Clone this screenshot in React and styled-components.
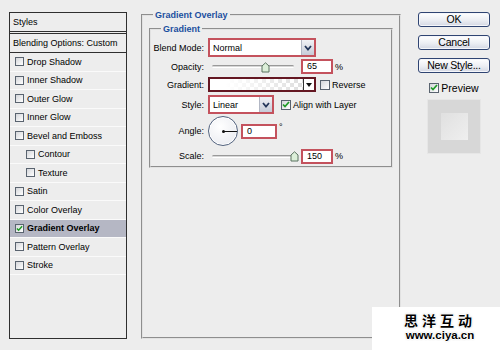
import React from 'react'
import styled, { createGlobalStyle } from 'styled-components'

const GlobalStyle = createGlobalStyle`
	html, body {
		margin: 0;
		padding: 0;
		background: #ededed;
	}
	body {
		font-family: 'Liberation Sans', Arial, sans-serif;
		font-size: 9px;
		color: #000;
	}
	* {
		box-sizing: border-box;
	}
`

const Page = styled.div`
	position: relative;
	width: 500px;
	height: 350px;
	overflow: hidden;
	display: flex;
	align-items: flex-start;
	background: #ededed;
`

/* ---------- left styles list ---------- */

const StylesPanel = styled.div`
	margin: 12px 0 0 9px;
	width: 118px;
	height: 327px;
	border: 1px solid #2f2f2f;
	display: flex;
	flex-direction: column;
`

const PanelHead = styled.div`
	height: 21px;
	line-height: 18px;
	padding-left: 3px;
	border-bottom: 3px double #2f2f2f;
`

const BlendRow = styled.div`
	height: 19px;
	line-height: 18px;
	padding-left: 3px;
	border-bottom: 1px solid #2f2f2f;
`

const StyleRow = styled.div`
	height: 18.5px;
	display: flex;
	align-items: center;
	gap: 3px;
	padding-left: ${({ indent }) => (indent ? '16px' : '5px')};
	border-bottom: 1px solid #fafafa;
	background: ${({ active }) => (active ? '#b5b7c4' : 'transparent')};
	font-weight: ${({ active }) => (active ? 700 : 400)};
`

const Box = styled.span`
	width: ${({ size }) => size || 9}px;
	height: ${({ size }) => size || 9}px;
	flex: none;
	border: 1px solid #59636f;
	background: linear-gradient(135deg, #d4d6da, #ffffff);
	display: flex;
	align-items: center;
	justify-content: center;
`

const Check = ({ checked, size }) => (
	<Box size={size}>
		{checked && (
			<svg width="8" height="7" viewBox="0 0 8 7">
				<path d="M1 3.5 L3 5.5 L7 1" fill="none" stroke="#1e9a26" strokeWidth="1.7" />
			</svg>
		)}
	</Box>
)

/* ---------- center group ---------- */

const Group = styled.fieldset`
	margin: ${({ outer }) => (outer ? '9px 0 0 14px' : '2px 0 0 0')};
	width: ${({ outer }) => (outer ? '260px' : '244px')};
	height: ${({ outer }) => (outer ? '330px' : '145px')};
	min-width: 0;
	border: 2px groove #e2e2e2;
	padding: ${({ outer }) => (outer ? '0 6px' : '0')};
`

const Legend = styled.legend`
	margin-left: ${({ outer }) => (outer ? '4px' : '10px')};
	padding: 0 2px;
	line-height: 12px;
	font-size: 9px;
	font-weight: 700;
	color: #1b4f9f;
`

const Form = styled.div`
	padding-top: 3px;
	display: flex;
	flex-direction: column;
`

const FieldRow = styled.div`
	display: flex;
	align-items: center;
	height: ${({ h }) => h}px;
	margin-top: ${({ mt }) => mt || 0}px;
`

const Label = styled.span`
	width: 53px;
	margin-right: 4px;
	text-align: right;
	flex: none;
`

const Select = styled.div`
	width: ${({ w }) => w}px;
	height: 19px;
	border: 2px solid #c4525d;
	background: #fff;
	display: flex;
	align-items: center;
	padding-left: 3px;
`

const SelectText = styled.span`
	flex: 1;
`

const DropButton = styled.span`
	width: 13px;
	height: 15px;
	background: linear-gradient(#f1f2f6, #c6cbd8);
	border-left: 1px solid #b2b7c4;
	display: flex;
	align-items: center;
	justify-content: center;
`

const Chevron = () => (
	<svg width="8" height="6" viewBox="0 0 8 6">
		<path d="M1 1 L4 4.5 L7 1" fill="none" stroke="#24365a" strokeWidth="1.8" />
	</svg>
)

const Input = styled.div`
	width: ${({ w }) => w}px;
	height: 15px;
	margin-left: ${({ ml }) => ml || 0}px;
	border: 2px solid #c4525d;
	background: #fff;
	padding-left: 4px;
	line-height: 11px;
`

const Unit = styled.span`
	margin-left: 2px;
	align-self: ${({ top }) => (top ? 'flex-start' : 'center')};
	margin-top: ${({ top }) => (top ? '6px' : '0')};
`

const SliderBox = styled.div`
	position: relative;
	width: 89px;
	height: 14px;
	display: flex;
	align-items: center;
	padding-left: 4px;
`

const Track = styled.div`
	width: 82px;
	height: 3px;
	border-top: 1px solid #999;
	border-bottom: 1px solid #fff;
	background: #d6d6d6;
	border-radius: 2px;
`

const Thumb = styled.svg`
	position: absolute;
	top: 2px;
	margin-left: -4px;
`

const Slider = ({ pos }) => (
	<SliderBox>
		<Track />
		<Thumb width="9" height="11" viewBox="0 0 9 11" style={{ left: 4 + pos * 82 }}>
			<path d="M1 4 L4.5 0.8 L8 4 L8 10 L1 10 Z" fill="#dcefd9" stroke="#5a7260" strokeWidth="1" />
		</Thumb>
	</SliderBox>
)

const GradientBox = styled.div`
	width: 108px;
	height: 15px;
	border: 2px solid #641722;
	display: flex;
	background: linear-gradient(to right, #fff 15%, rgba(255, 255, 255, 0) 90%),
		repeating-conic-gradient(#dedede 0 25%, #fff 0 50%) 0 0 / 8px 8px;
`

const GradientFill = styled.span`
	flex: 1;
`

const GradientArrow = styled.span`
	width: 11px;
	background: #fff;
	border-left: 1px solid #333;
	display: flex;
	align-items: center;
	justify-content: center;
	&::after {
		content: '';
		border-left: 3px solid transparent;
		border-right: 3px solid transparent;
		border-top: 4px solid #111;
	}
`

const Inline = styled.span`
	display: flex;
	align-items: center;
	gap: 2px;
	margin-left: ${({ ml }) => ml}px;
`

const Dial = styled.div`
	position: relative;
	width: 30px;
	height: 30px;
	border-radius: 50%;
	border: 1px solid #52627e;
	background: radial-gradient(circle at 40% 35%, #ffffff, #e6e8ee);
	box-shadow: inset 0 0 0 1px #fff;
	flex: none;
	&::before {
		content: '';
		position: absolute;
		left: 13px;
		top: 13px;
		width: 3px;
		height: 3px;
		border-radius: 50%;
		background: #111;
	}
	&::after {
		content: '';
		position: absolute;
		left: 14px;
		top: 14px;
		width: 14px;
		height: 1px;
		background: #111;
	}
`

/* ---------- right column ---------- */

const Side = styled.div`
	margin: 12px 0 0 17px;
	width: 72px;
	display: flex;
	flex-direction: column;
	align-items: center;
`

const Button = styled.div`
	width: 72px;
	height: 15px;
	margin-bottom: 8px;
	border: 1px solid #2f4472;
	border-radius: 3px;
	background: linear-gradient(#ffffff, #eceef3 55%, #d3d7e3);
	box-shadow: inset 0 0 0 1px #f5f6fa;
	font-size: 10.5px;
	line-height: 13px;
	text-align: center;
	letter-spacing: -0.2px;
`

const PreviewRow = styled.div`
	display: flex;
	align-items: center;
	gap: 2px;
	margin-top: 1px;
	font-size: 10.5px;
	height: 11px;
`

const Swatch = styled.div`
	margin-top: 6px;
	width: 54px;
	height: 55px;
	background: #d7d7d7;
	border: 1px solid #e6e6e6;
	display: flex;
	align-items: center;
	justify-content: center;
`

const SwatchInner = styled.div`
	width: 27px;
	height: 27px;
	background: linear-gradient(135deg, #e0e0e0, #efefef);
`

/* ---------- watermark ---------- */

const Watermark = styled.div`
	position: absolute;
	right: 0;
	bottom: 0;
	width: 128px;
	height: 43px;
	background: #fff;
	display: flex;
	flex-direction: column;
	align-items: center;
	gap: 1px;
	padding: 6px 0 0 8px;
	font-weight: 700;
	color: #000;
	text-shadow: 1px 0 #fff, -1px 0 #fff, 0 1px #fff, 0 -1px #fff, 0 0 2px #777;
`

const MarkTitle = styled.div`
	font-family: 'Noto Sans CJK SC', sans-serif;
	font-size: 14px;
	line-height: 15px;
	letter-spacing: 4px;
`

const MarkUrl = styled.div`
	font-family: 'Liberation Sans', Arial, sans-serif;
	font-size: 11.5px;
	line-height: 12px;
`

const styleItems = [
	{ name: 'Drop Shadow' },
	{ name: 'Inner Shadow' },
	{ name: 'Outer Glow' },
	{ name: 'Inner Glow' },
	{ name: 'Bevel and Emboss' },
	{ name: 'Contour', indent: true },
	{ name: 'Texture', indent: true },
	{ name: 'Satin' },
	{ name: 'Color Overlay' },
	{ name: 'Gradient Overlay', active: true },
	{ name: 'Pattern Overlay' },
	{ name: 'Stroke' },
]

export default function App() {
	return (
		<>
			<GlobalStyle />
			<Page>
				<StylesPanel>
					<PanelHead>Styles</PanelHead>
					<BlendRow>Blending Options: Custom</BlendRow>
					{styleItems.map((s) => (
						<StyleRow key={s.name} indent={s.indent} active={s.active}>
							<Check checked={s.active} />
							{s.name}
						</StyleRow>
					))}
				</StylesPanel>

				<Group outer>
					<Legend outer>Gradient Overlay</Legend>
					<Group>
						<Legend>Gradient</Legend>
						<Form>
							<FieldRow h={19}>
								<Label>Blend Mode:</Label>
								<Select w={108}>
									<SelectText>Normal</SelectText>
									<DropButton>
										<Chevron />
									</DropButton>
								</Select>
							</FieldRow>
							<FieldRow h={17} mt={1}>
								<Label>Opacity:</Label>
								<Slider pos={0.65} />
								<Input w={32} ml={4}>65</Input>
								<Unit>%</Unit>
							</FieldRow>
							<FieldRow h={15} mt={2}>
								<Label>Gradient:</Label>
								<GradientBox>
									<GradientFill />
									<GradientArrow />
								</GradientBox>
								<Inline ml={4}>
									<Check size={10} />
									Reverse
								</Inline>
							</FieldRow>
							<FieldRow h={19} mt={3}>
								<Label>Style:</Label>
								<Select w={66}>
									<SelectText>Linear</SelectText>
									<DropButton>
										<Chevron />
									</DropButton>
								</Select>
								<Inline ml={7}>
									<Check size={10} checked />
									Align with Layer
								</Inline>
							</FieldRow>
							<FieldRow h={30} mt={2}>
								<Label>Angle:</Label>
								<Dial />
								<Input w={36} ml={3}>0</Input>
								<Unit top>°</Unit>
							</FieldRow>
							<FieldRow h={16} mt={2}>
								<Label>Scale:</Label>
								<Slider pos={1} />
								<Input w={32} ml={4}>150</Input>
								<Unit>%</Unit>
							</FieldRow>
						</Form>
					</Group>
				</Group>

				<Side>
					<Button>OK</Button>
					<Button>Cancel</Button>
					<Button>New Style...</Button>
					<PreviewRow>
						<Check size={10} checked />
						Preview
					</PreviewRow>
					<Swatch>
						<SwatchInner />
					</Swatch>
				</Side>

				<Watermark>
					<MarkTitle>思洋互动</MarkTitle>
					<MarkUrl>www.ciya.cn</MarkUrl>
				</Watermark>
			</Page>
		</>
	)
}
